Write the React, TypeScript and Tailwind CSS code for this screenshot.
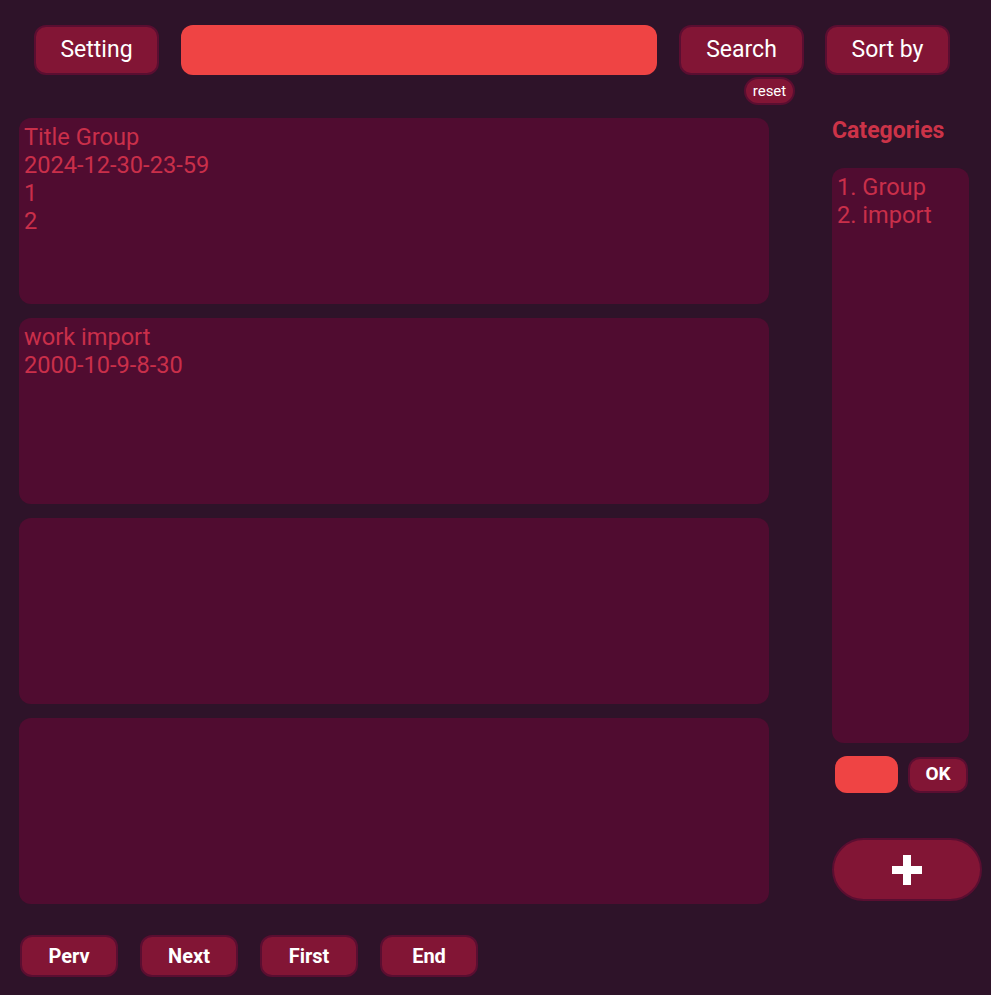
import React from "react";

const btn =
  "flex items-center justify-center bg-[#821535] border-2 border-[#5a0e31] text-white rounded-[12px]";

export default function App() {
  return (
    <div
      className="w-[991px] h-[995px] bg-[#2e1329] overflow-hidden"
      style={{ fontFamily: "Roboto, 'Noto Sans', sans-serif" }}
    >
      {/* Header */}
      <div className="flex items-start pt-[25px] pl-[34px]">
        <button className={`${btn} w-[125px] h-[50px] text-[23px]`}>Setting</button>
        <div className="ml-[22px] w-[476px] h-[50px] bg-[#ef4444] rounded-[12px]" />
        <div className="ml-[22px] flex flex-col items-end">
          <button className={`${btn} w-[125px] h-[50px] text-[23px]`}>Search</button>
          <button className="mt-[2px] mr-[9px] w-[51px] h-[28px] flex items-center justify-center bg-[#821535] border-2 border-[#5a0e31] text-white rounded-full text-[15px]">
            reset
          </button>
        </div>
        <button className={`${btn} ml-[21px] w-[125px] h-[50px] text-[23px]`}>Sort by</button>
      </div>

      {/* Main */}
      <div className="flex mt-[13px]">
        <div className="ml-[19px] w-[750px] flex flex-col gap-[14px]">
          <div className="h-[186px] bg-[#500c30] rounded-[12px] px-[5px] pt-[5px] text-[23.6px] leading-[28px] text-[#c92f4a]">
            <div>Title Group</div>
            <div>2024-12-30-23-59</div>
            <div>1</div>
            <div>2</div>
          </div>
          <div className="h-[186px] bg-[#500c30] rounded-[12px] px-[5px] pt-[5px] text-[23.6px] leading-[28px] text-[#c92f4a]">
            <div>work import</div>
            <div>2000-10-9-8-30</div>
          </div>
          <div className="h-[186px] bg-[#500c30] rounded-[12px]" />
          <div className="h-[186px] bg-[#500c30] rounded-[12px]" />
        </div>

        <div className="ml-[63px] w-[150px] flex flex-col">
          <div className="w-[137px] text-left text-[23px] font-bold text-[#cc3348] leading-[26px]">
            Categories
          </div>
          <div className="mt-[24px] w-[137px] h-[575px] bg-[#500c30] rounded-[12px] px-[5px] pt-[5px] text-[23.6px] leading-[28px] text-[#c92f4a]">
            <div>1. Group</div>
            <div>2. import</div>
          </div>
          <div className="mt-[13px] flex items-center">
            <div className="ml-[3px] w-[63px] h-[37px] bg-[#ef4444] rounded-[12px]" />
            <button className="ml-[10px] w-[60px] h-[36px] flex items-center justify-center bg-[#821535] border-2 border-[#5a0e31] text-white rounded-[12px] text-[19px] font-bold">
              OK
            </button>
          </div>
          <button className="mt-[45px] w-[150px] h-[63px] flex items-center justify-center bg-[#821535] border-2 border-[#5a0e31] rounded-full">
            <svg width="30" height="30" viewBox="0 0 30 30">
              <rect x="11" y="0" width="8" height="30" fill="white" />
              <rect x="0" y="11" width="30" height="8" fill="white" />
            </svg>
          </button>
        </div>
      </div>

      {/* Footer */}
      <div className="flex gap-[22px] pl-[20px] mt-[31px]">
        {["Perv", "Next", "First", "End"].map((t) => (
          <button
            key={t}
            className="w-[98px] h-[42px] flex items-center justify-center bg-[#821535] border-2 border-[#5a0e31] text-white rounded-[12px] text-[20px] font-bold"
          >
            {t}
          </button>
        ))}
      </div>
    </div>
  );
}
